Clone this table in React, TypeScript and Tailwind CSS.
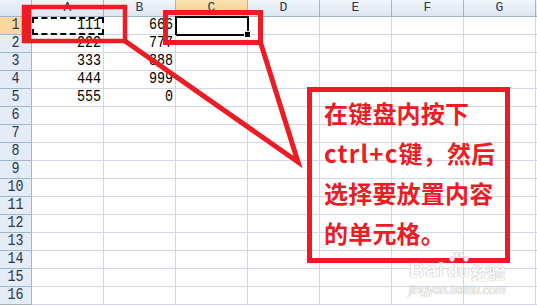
import React from 'react';

const cols = ['A', 'B', 'C', 'D', 'E', 'F', 'G', 'H'];

const values: Record<string, string> = {
    A1: '111', B1: '666',
    A2: '222', B2: '777',
    A3: '333', B3: '888',
    A4: '444', B4: '999',
    A5: '555', B5: '0',
};

const rows = Array.from({ length: 16 }, (_, i) => i + 1);

const mono = "font-['Liberation_Mono','DejaVu_Sans_Mono',monospace]";

const Cell: React.FC<{ col: string; row: number }> = ({ col, row }) => {
    const id = `${col}${row}`;
    const isCopied = id === 'A1';
    const isActive = id === 'C1';
    return (
        <div
            className={`relative w-[72px] shrink-0 h-full flex items-end justify-end pr-[2px] pb-[1px] border-r border-b border-[#d0d7e5] text-black
                ${isCopied ? 'outline-2 outline-dashed outline-black -outline-offset-2' : ''}
                ${isActive ? 'outline-2 outline-black -outline-offset-1' : ''}`}
        >
            {values[id] && (
                <span className={`${mono} text-[13.4px] leading-none scale-y-[1.28] origin-bottom`}>{values[id]}</span>
            )}
            {isActive && (
                <span className="absolute -right-[4px] -bottom-[4px] w-[7px] h-[7px] bg-black border border-white z-10"></span>
            )}
        </div>
    );
};

const App: React.FC = () => {
    return (
        <div className="relative w-[537px] h-[306px] overflow-hidden bg-white select-none">
            {/* column headers */}
            <div className="flex h-[17px]">
                <div className="w-[32px] shrink-0 bg-gradient-to-b from-[#eef3fa] to-[#dae3f0] border-r border-b border-[#9eb6ce]"></div>
                {cols.map(c => (
                    <div
                        key={c}
                        className={`w-[72px] shrink-0 flex items-center justify-center border-r border-b border-[#9eb6ce] text-[#27394d] ${mono} text-[13px] leading-[16px]
                            ${c === 'C' ? 'bg-gradient-to-b from-[#fbe0b0] to-[#f7cf88]' : 'bg-gradient-to-b from-[#f2f6fb] to-[#dce5f1]'}`}
                    >
                        {/* the column past G is scrolled off; its letter is not visible */}
                        {c === 'H' ? '' : c}
                    </div>
                ))}
            </div>

            {/* grid rows */}
            {rows.map(r => (
                <div key={r} className="flex h-[18px]">
                    <div
                        className={`w-[32px] shrink-0 flex items-end justify-center pb-[1px] border-r border-b border-[#9eb6ce] text-[#27394d]
                            ${r === 1 ? 'bg-[#fad79c]' : 'bg-[#e4ecf7]'}`}
                    >
                        <span className={`${mono} text-[13.4px] leading-none scale-y-[1.28] origin-bottom`}>{r}</span>
                    </div>
                    {cols.map(c => <Cell key={c} col={c} row={r} />)}
                </div>
            ))}

            {/* annotation drawing */}
            <svg className="absolute inset-0 pointer-events-none" width="537" height="306" viewBox="0 0 537 306">
                <rect x="22" y="5" width="9" height="38" fill="#ed1c24" />
                <rect x="24" y="7" width="101" height="34" fill="none" stroke="#ed1c24" strokeWidth="4.5" />
                <rect x="165.5" y="12.5" width="95" height="30" fill="none" stroke="#ed1c24" strokeWidth="5" />
                <polyline points="125,41 298,162 261,44" fill="none" stroke="#ed1c24" strokeWidth="5" strokeLinejoin="miter" />
            </svg>

            {/* callout */}
            <div className="absolute left-[307px] top-[87px] w-[203px] h-[176px] border-[5px] border-[#ed1c24] pl-[12px] pt-px">
                <div className="font-['Noto_Sans_CJK_SC','Noto_Sans',sans-serif] font-bold text-[24px] leading-[40px] text-[#ed1c24] tracking-[0.2px] whitespace-nowrap">
                    <div>在键盘内按下</div>
                    <div><span className="tracking-[1.2px]">ctrl+c</span>键，然后</div>
                    <div>选择要放置内容</div>
                    <div>的单元格。</div>
                </div>
            </div>

            {/* watermark */}
            <div className="absolute left-[409px] top-[259px] flex flex-col items-center text-[#fbfbfb] [text-shadow:0_0_1px_#b4b4b4,0_0_1px_#b4b4b4]">
                <div className="flex items-end h-[21px]">
                    <span className="font-['Liberation_Sans',sans-serif] font-bold text-[21px] leading-none tracking-[1px]">Bai</span>
                    <span className="relative font-['Liberation_Sans',sans-serif] font-bold text-[18px] leading-none ml-[2px]">
                        du
                        <svg className="absolute -top-[10px] left-[2px]" width="20" height="10" viewBox="0 0 20 10">
                            <circle cx="3" cy="7" r="2.4" fill="#fbfbfb" stroke="#bdbdbd" strokeWidth="0.6" />
                            <circle cx="7.5" cy="3" r="2.4" fill="#fbfbfb" stroke="#bdbdbd" strokeWidth="0.6" />
                            <circle cx="12.5" cy="3" r="2.4" fill="#fbfbfb" stroke="#bdbdbd" strokeWidth="0.6" />
                            <circle cx="17" cy="7" r="2.4" fill="#fbfbfb" stroke="#bdbdbd" strokeWidth="0.6" />
                        </svg>
                    </span>
                    <span className="font-['Noto_Sans_CJK_SC',sans-serif] font-bold text-[17px] leading-none ml-[2px]">经验</span>
                </div>
                <div className="font-['Liberation_Sans',sans-serif] italic text-[12px] leading-none mt-[4px]">jingyan.baidu.com</div>
            </div>
        </div>
    );
};

export default App;
